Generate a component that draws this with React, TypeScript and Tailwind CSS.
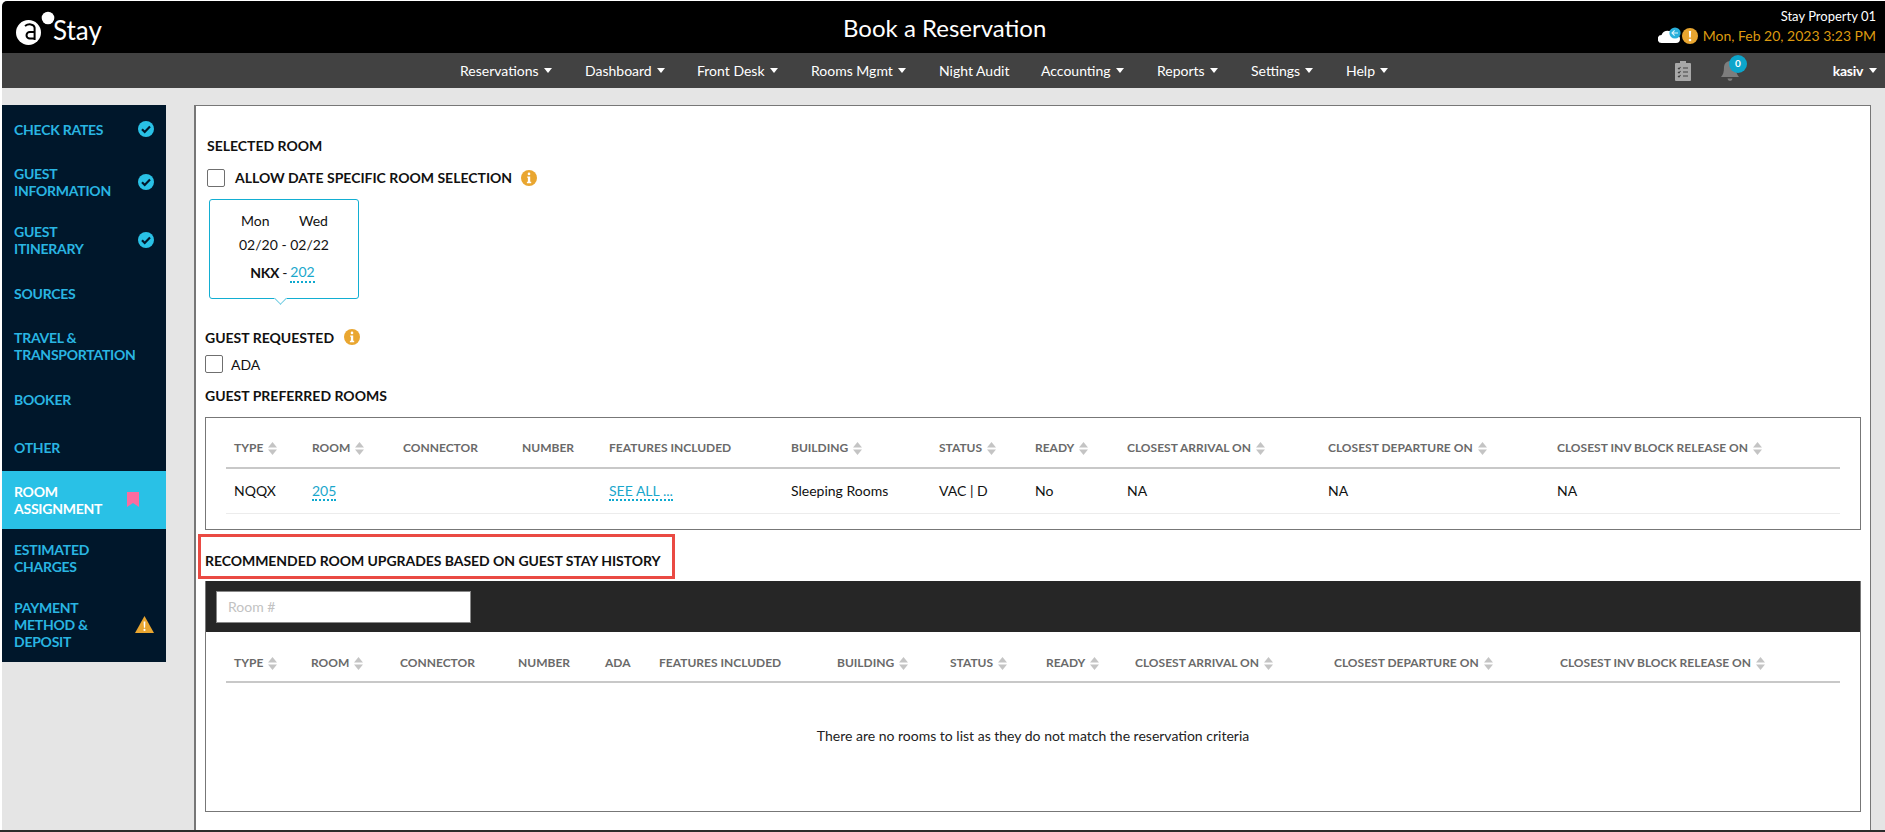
import { FC } from "react";

const navItems = [
  { name: "Reservations", w: "w-[125px]", caret: true },
  { name: "Dashboard", w: "w-[112px]", caret: true },
  { name: "Front Desk", w: "w-[114px]", caret: true },
  { name: "Rooms Mgmt", w: "w-[128px]", caret: true },
  { name: "Night Audit", w: "w-[102px]", caret: false },
  { name: "Accounting", w: "w-[116px]", caret: true },
  { name: "Reports", w: "w-[94px]", caret: true },
  { name: "Settings", w: "w-[95px]", caret: true },
  { name: "Help", w: "w-[50px]", caret: true },
];

const sideItems = [
  { label: ["CHECK RATES"], icon: "check" },
  { label: ["GUEST", "INFORMATION"], icon: "check" },
  { label: ["GUEST", "ITINERARY"], icon: "check" },
  { label: ["SOURCES"] },
  { label: ["TRAVEL &", "TRANSPORTATION"] },
  { label: ["BOOKER"] },
  { label: ["OTHER"] },
  { label: ["ROOM", "ASSIGNMENT"], icon: "bookmark", active: true },
  { label: ["ESTIMATED", "CHARGES"] },
  { label: ["PAYMENT", "METHOD &", "DEPOSIT"], icon: "warning" },
];

const preferredCols = [
  { name: "TYPE", w: "w-[78px]", sort: true },
  { name: "ROOM", w: "w-[91px]", sort: true },
  { name: "CONNECTOR", w: "w-[119px]" },
  { name: "NUMBER", w: "w-[87px]" },
  { name: "FEATURES INCLUDED", w: "w-[182px]" },
  { name: "BUILDING", w: "w-[148px]", sort: true },
  { name: "STATUS", w: "w-[96px]", sort: true },
  { name: "READY", w: "w-[92px]", sort: true },
  { name: "CLOSEST ARRIVAL ON", w: "w-[201px]", sort: true },
  { name: "CLOSEST DEPARTURE ON", w: "w-[229px]", sort: true },
  { name: "CLOSEST INV BLOCK RELEASE ON", w: "w-[270px]", sort: true },
];

const upgradeCols = [
  { name: "TYPE", w: "w-[77px]", sort: true },
  { name: "ROOM", w: "w-[89px]", sort: true },
  { name: "CONNECTOR", w: "w-[118px]" },
  { name: "NUMBER", w: "w-[87px]" },
  { name: "ADA", w: "w-[54px]" },
  { name: "FEATURES INCLUDED", w: "w-[178px]" },
  { name: "BUILDING", w: "w-[113px]", sort: true },
  { name: "STATUS", w: "w-[96px]", sort: true },
  { name: "READY", w: "w-[89px]", sort: true },
  { name: "CLOSEST ARRIVAL ON", w: "w-[199px]", sort: true },
  { name: "CLOSEST DEPARTURE ON", w: "w-[226px]", sort: true },
  { name: "CLOSEST INV BLOCK RELEASE ON", w: "w-[270px]", sort: true },
];

const Caret: FC<{ className?: string }> = ({ className }) => (
  <svg viewBox="0 0 8 5" className={className}>
    <path d="M0 0h8L4 5z" fill="currentColor" />
  </svg>
);

const SortIcon = () => (
  <svg viewBox="0 0 9 13" className="ml-[5px] h-[13px] w-[9px] shrink-0">
    <path d="M4.5 0L9 5.5H0z" fill="#c4c4c4" />
    <path d="M4.5 13L9 7.5H0z" fill="#c4c4c4" />
  </svg>
);

const InfoIcon = () => (
  <svg viewBox="0 0 16 16" className="h-4 w-4">
    <circle cx="8" cy="8" r="8" fill="#e9a630" />
    <circle cx="8" cy="3.9" r="1.3" fill="#fff" />
    <path d="M6.2 6.4h3v5.4h1v1.4H5.9v-1.4h1V7.8h-.7z" fill="#fff" />
  </svg>
);

const Logo = () => (
  <svg viewBox="0 0 42 36" className="h-[36px] w-[42px]">
    <circle cx="12.5" cy="23.5" r="12.5" fill="#fff" />
    <path d="M9 17c3-2.2 9-2.6 9.6 1.6V31" fill="none" stroke="#000" strokeWidth="2" />
    <path d="M18.6 23h-4.8a3.3 3.3 0 0 0 0 6.6h4.8" fill="none" stroke="#000" strokeWidth="2" />
    <circle cx="32" cy="9" r="7.8" fill="#000" />
    <circle cx="32" cy="9" r="6.3" fill="#fff" />
  </svg>
);

const SideIcon: FC<{ type?: string }> = ({ type }) => {
  if (type === "check")
    return (
      <svg viewBox="0 0 16 16" className="mr-[12px] h-4 w-4">
        <circle cx="8" cy="8" r="8" fill="#29c1e6" />
        <path d="M4 8.3l2.7 2.7L12 5.6" fill="none" stroke="#00172b" strokeWidth="2.2" />
      </svg>
    );
  if (type === "bookmark")
    return (
      <svg viewBox="0 0 12 15" className="mr-[27px] mb-[1px] h-[15px] w-[12px]">
        <path d="M0 0h12v15l-6-4-6 4z" fill="#fb6c9f" />
      </svg>
    );
  if (type === "warning")
    return (
      <svg viewBox="0 0 19 17" className="mr-[12px] h-[17px] w-[19px]">
        <path d="M9.5 0L19 17H0z" fill="#e9a630" />
        <path d="M8.6 5.5h1.8l-.3 6.3h-1.2z" fill="#fff" />
        <circle cx="9.5" cy="13.9" r="1.1" fill="#fff" />
      </svg>
    );
  return null;
};

const Checkbox = () => (
  <span className="block h-[18px] w-[18px] shrink-0 rounded-[2px] border border-[#6f6f6f] bg-white" />
);

const DottedLink: FC<{ children: string; className?: string }> = ({ children, className }) => (
  <span className={`border-b-2 border-dotted border-[#0fa9cf] leading-[17px] text-[#1aa7cc] ${className ?? ""}`}>
    {children}
  </span>
);

const TableHead: FC<{ cols: { name: string; w: string; sort?: boolean }[]; className: string }> = ({
  cols,
  className,
}) => (
  <div
    className={`flex items-center border-b-2 border-[#c8c8c8] pl-[8px] text-[12px] font-bold text-[#6a6a6a] ${className}`}
  >
    {cols.map((col) => (
      <div key={col.name} className={`flex items-center ${col.w}`}>
        {col.name}
        {col.sort && <SortIcon />}
      </div>
    ))}
  </div>
);

const Header = () => (
  <header className="relative flex h-[52px] shrink-0 items-center justify-between rounded-tl-[5px] bg-black pl-[14px] pr-[9px]">
    <div className="flex items-center">
      <Logo />
      <span className="mt-[5px] -ml-[5px] text-[26px] leading-none text-white">Stay</span>
    </div>
    <h1 className="absolute left-[841px] top-[12px] text-[24px] leading-[30px] text-white">Book a Reservation</h1>
    <div className="flex flex-col items-end pb-[3px]">
      <span className="text-[13px] leading-[20px] text-white">Stay Property 01</span>
      <div className="flex items-center">
        <svg viewBox="0 0 23 17" className="h-[17px] w-[23px]">
          <path d="M4 16a4 4 0 0 1-.5-8A7 7 0 0 1 11 4a6 6 0 0 1 7 4 4 4 0 0 1 0 8z" fill="#fff" />
          <circle cx="17" cy="6" r="5.6" fill="#29b0dc" />
          <path d="M20 6h-5.8M16.6 3.4L14 6l2.6 2.6" fill="none" stroke="#dff5fb" strokeWidth="1.1" />
        </svg>
        <svg viewBox="0 0 16 16" className="mr-[5px] ml-[1px] h-4 w-4">
          <circle cx="8" cy="8" r="8" fill="#e9a630" />
          <path d="M6.9 3h2.2l-.3 6.6H7.2z" fill="#fff" />
          <circle cx="8" cy="12" r="1.3" fill="#fff" />
        </svg>
        <span className="text-[14px] leading-[20px] text-[#dd9a10]">Mon, Feb 20, 2023 3:23 PM</span>
      </div>
    </div>
  </header>
);

const NavBar = () => (
  <nav className="flex h-[35px] shrink-0 items-center bg-[#424242] pl-[458px] pr-[8px] text-white">
    {navItems.map((item) => (
      <div key={item.name} className={`flex items-center text-[14px] ${item.w}`}>
        {item.name}
        {item.caret && <Caret className="ml-[5px] h-[5px] w-[8px] text-white" />}
      </div>
    ))}
    <div className="ml-auto flex items-center">
      <svg viewBox="0 0 16 20" className="mr-[30px] h-[20px] w-[16px]">
        <path d="M1 2h4V0h6v2h4a1 1 0 0 1 1 1v16a1 1 0 0 1-1 1H1a1 1 0 0 1-1-1V3a1 1 0 0 1 1-1z" fill="#a8a8a8" />
        <path d="M3 7l1 1 1.5-2M8 7h5M3 11l1 1 1.5-2M8 11h5M3 15l1 1 1.5-2M8 15h5" fill="none" stroke="#424242" strokeWidth="1.1" />
      </svg>
      <div className="relative mr-[94px] h-[20px] w-[18px]">
        <svg viewBox="0 0 18 20" className="h-[20px] w-[18px]">
          <path d="M9 0a6 6 0 0 1 6 6c0 5 1 8 3 10H0c2-2 3-5 3-10a6 6 0 0 1 6-6z" fill="#7d7d7d" />
          <path d="M6.5 17.5h5a2.5 2.5 0 0 1-5 0z" fill="#7d7d7d" />
        </svg>
        <span className="absolute -top-[6px] left-[8px] flex h-[18px] w-[18px] items-center justify-center rounded-full bg-[#0da5cb] text-[10px] font-bold text-white">
          0
        </span>
      </div>
      <span className="text-[14px] font-bold tracking-[-0.3px]">kasiv</span>
      <Caret className="ml-[6px] h-[5px] w-[8px] text-white" />
    </div>
  </nav>
);

const Sidebar = () => (
  <aside className="w-[164px] shrink-0 self-start bg-[#00172b] text-[14px] leading-[17px] font-bold tracking-[-0.25px]">
    {sideItems.map((item) => (
      <div
        key={item.label.join(" ")}
        className={`flex min-h-[48px] items-center justify-between py-[12px] pl-[12px] ${
          item.active ? "bg-[#29c1e6] text-white" : "text-[#29b5e2]"
        }`}
      >
        <div>
          {item.label.map((line) => (
            <div key={line}>{line}</div>
          ))}
        </div>
        <SideIcon type={item.icon} />
      </div>
    ))}
  </aside>
);

const SelectedRoom = () => (
  <>
    <h2 className="ml-[2px] mt-[30px] text-[14px] leading-[20px] font-bold">SELECTED ROOM</h2>
    <div className="ml-[2px] mt-[13px] flex h-[18px] items-center">
      <Checkbox />
      <span className="ml-[10px] -translate-y-px text-[14px] font-bold">ALLOW DATE SPECIFIC ROOM SELECTION</span>
      <span className="ml-[9px]">
        <InfoIcon />
      </span>
    </div>
    <div className="relative ml-[4px] mt-[12px] h-[100px] w-[150px] rounded-[3px] border border-[#12aed2] text-[14px]">
      <div className="mt-[10px] flex h-[20px] items-center pl-[31px]">
        <span className="w-[58px]">Mon</span>
        <span>Wed</span>
      </div>
      <div className="mt-[5px] h-[20px] pl-[29px] leading-[20px]">02/20 - 02/22</div>
      <div className="mt-[8px] flex h-[20px] justify-center pr-[3px] leading-[20px]">
        <b className="tracking-[-0.3px]">NKX</b>
        <span className="ml-[3px] mr-[3px]">-</span>
        <DottedLink>202</DottedLink>
      </div>
      <span className="absolute -bottom-[5px] left-[66px] h-[9px] w-[9px] rotate-45 border-r border-b border-[#6fcbe2] bg-white" />
    </div>
    <div className="mt-[28px] flex h-[20px] items-center">
      <span className="text-[14px] font-bold">GUEST REQUESTED</span>
      <span className="ml-[10px]">
        <InfoIcon />
      </span>
    </div>
    <div className="mt-[8px] flex h-[18px] items-center">
      <Checkbox />
      <span className="ml-[8px] text-[14px]">ADA</span>
    </div>
  </>
);

const PreferredRooms = () => (
  <>
    <h2 className="mt-[13px] text-[14px] leading-[20px] font-bold">GUEST PREFERRED ROOMS</h2>
    <section className="mt-[11px] h-[113px] border border-[#777] px-[20px] pt-[15px]">
      <TableHead cols={preferredCols} className="h-[36px] pb-[4px]" />
      <div className="flex h-[45px] items-center border-b border-[#ececec] pb-[2px] pl-[8px] text-[14px]">
        <div className="w-[78px]">NQQX</div>
        <div className="w-[91px]">
          <DottedLink>205</DottedLink>
        </div>
        <div className="w-[119px]" />
        <div className="w-[87px]" />
        <div className="w-[182px]">
          <DottedLink>SEE ALL ...</DottedLink>
        </div>
        <div className="w-[148px]">Sleeping Rooms</div>
        <div className="w-[96px]">VAC | D</div>
        <div className="w-[92px]">No</div>
        <div className="w-[201px]">NA</div>
        <div className="w-[229px]">NA</div>
        <div>NA</div>
      </div>
    </section>
  </>
);

const UpgradeRooms = () => (
  <>
    <div className="-ml-[7px] mt-[4px] flex h-[45px] w-[477px] items-end border-[3px] border-[#ea4a43] pb-[5px] pl-[4px]">
      <h2 className="text-[14px] leading-[20px] font-bold tracking-[-0.05px]">
        RECOMMENDED ROOM UPGRADES BASED ON GUEST STAY HISTORY
      </h2>
    </div>
    <section className="mt-[2px] h-[231px] border border-[#777] border-t-0">
      <div className="flex h-[51px] items-center bg-[#262626] pl-[10px]">
        <div className="flex h-[32px] w-[255px] items-center border border-[#888] bg-white pl-[11px] text-[14px] text-[#c2c2c2]">
          Room #
        </div>
      </div>
      <div className="mx-[20px] mt-[15px]">
        <TableHead cols={upgradeCols} className="h-[36px] pb-[2px]" />
      </div>
      <p className="mt-[43px] text-center text-[14px] leading-[20px] text-[#222]">
        There are no rooms to list as they do not match the reservation criteria
      </p>
    </section>
  </>
);

const App: FC = () => {
  return (
    <div className="flex h-screen w-full flex-col overflow-hidden bg-white pt-[1px] font-['Lato',sans-serif] text-[#111]">
      <div className="flex min-h-0 flex-1 flex-col pl-[2px]">
        <Header />
        <NavBar />
        <div className="flex min-h-0 flex-1 bg-[#e5e5e5] pt-[17px]">
          <Sidebar />
          <main className="ml-[28px] w-[1677px] border-t border-r border-l-2 border-[#777] bg-white pl-[9px] pr-[9px]">
            <SelectedRoom />
            <PreferredRooms />
            <UpgradeRooms />
          </main>
        </div>
      </div>
      <div className="h-[2px] shrink-0 bg-[#2b2b2b]" />
    </div>
  );
};

export default App;
